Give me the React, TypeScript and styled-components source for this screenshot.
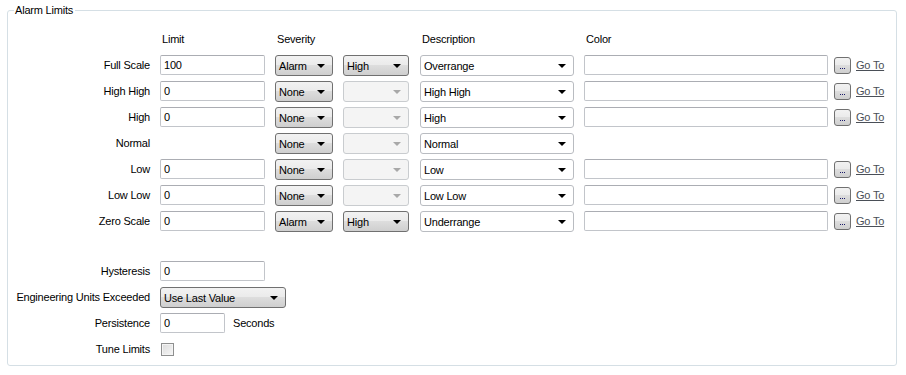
import React from "react";
import styled, { createGlobalStyle } from "styled-components";

const GlobalStyle = createGlobalStyle`
    html, body {
        margin: 0;
        padding: 0;
        background: #ffffff;
    }
    body {
        font-family: "Liberation Sans", Arial, sans-serif;
        font-size: 11px;
        letter-spacing: -0.2px;
        color: #000;
    }
`;

const GroupBox = styled.fieldset`
    box-sizing: border-box;
    width: 890px;
    height: 363px;
    margin: 3px 0 0 7px;
    padding: 9px 0 0 0;
    border: 1px solid #d5dfe5;
    border-radius: 3px;
`;

const Legend = styled.legend`
    margin-left: 6px;
    padding: 0 2px 0 1px;
    line-height: 14px;
`;

const Grid = styled.div`
    display: grid;
    grid-template-columns: 152px 115px 68px 77px 164px 250px 22px auto;
    grid-auto-rows: 26px;
    align-items: center;
`;

const Settings = styled.div`
    display: grid;
    grid-template-columns: 152px auto;
    grid-auto-rows: 26px;
    align-items: center;
    margin-top: 24px;
`;

const Header = styled.div`
    padding-left: 2px;
`;

const Label = styled.div`
    text-align: right;
    padding-right: 10px;
    white-space: nowrap;
`;

const Inline = styled.div`
    display: flex;
    align-items: center;
    gap: 8px;
`;

const TextBox = styled.div<{ $width: number }>`
    box-sizing: border-box;
    width: ${p => p.$width}px;
    height: 20px;
    border: 1px solid #c2c5ca;
    border-top-color: #abadb3;
    border-radius: 2px;
    background: #fff;
    padding: 2px 3px 0;
    line-height: 14px;
`;

type ComboVariant = "button" | "disabled" | "white";

const ComboBox = styled.div<{ $width: number; $variant: ComboVariant }>`
    box-sizing: border-box;
    position: relative;
    width: ${p => p.$width}px;
    height: 21px;
    border: 1px solid ${p => (p.$variant === "button" ? "#707070" : p.$variant === "disabled" ? "#c9cccf" : "#b9bcc1")};
    border-radius: 3px;
    background: ${p =>
        p.$variant === "button"
            ? "linear-gradient(#f2f2f2 0%, #ebebeb 45%, #dddddd 50%, #cfcfcf 100%)"
            : p.$variant === "disabled"
            ? "#f4f4f4"
            : "#ffffff"};
    padding: 3px 0 0 3px;
    line-height: 14px;
    white-space: nowrap;
`;

const Arrow = styled.span<{ $disabled?: boolean }>`
    position: absolute;
    right: 7px;
    top: 8px;
    width: 0;
    height: 0;
    border-left: 4px solid transparent;
    border-right: 4px solid transparent;
    border-top: 4px solid ${p => (p.$disabled ? "#a8a8a8" : "#000")};
`;

const DotsButton = styled.div`
    box-sizing: border-box;
    display: flex;
    justify-content: center;
    align-items: flex-end;
    gap: 1px;
    width: 17px;
    height: 17px;
    padding-bottom: 4px;
    border: 1px solid #707070;
    border-radius: 3px;
    background: linear-gradient(#f2f2f2 0%, #ebebeb 45%, #dddddd 50%, #cfcfcf 100%);
`;

const Dot = styled.span`
    width: 1px;
    height: 1px;
    background: #1a1a6a;
`;

const GoTo = styled.a`
    color: #4a4f57;
    text-decoration: underline;
    cursor: pointer;
`;

const CheckBox = styled.div`
    box-sizing: border-box;
    width: 13px;
    height: 13px;
    margin-left: 1px;
    border: 1px solid #8e8f8f;
    background: linear-gradient(135deg, #dcdcdc, #f6f6f6);
    box-shadow: inset 0 0 0 1px #f4f4f4;
`;

const Combo: React.FC<{ width: number; variant: ComboVariant; value?: string }> = ({ width, variant, value }) => (
    <ComboBox $width={width} $variant={variant}>
        {value}
        <Arrow $disabled={variant === "disabled"} />
    </ComboBox>
);

type LimitRow = {
    name: string;
    limit?: string;
    severity: string;
    priority?: string;
    description: string;
    hasColor: boolean;
};

const rows: LimitRow[] = [
    { name: "Full Scale", limit: "100", severity: "Alarm", priority: "High", description: "Overrange", hasColor: true },
    { name: "High High", limit: "0", severity: "None", description: "High High", hasColor: true },
    { name: "High", limit: "0", severity: "None", description: "High", hasColor: true },
    { name: "Normal", severity: "None", description: "Normal", hasColor: false },
    { name: "Low", limit: "0", severity: "None", description: "Low", hasColor: true },
    { name: "Low Low", limit: "0", severity: "None", description: "Low Low", hasColor: true },
    { name: "Zero Scale", limit: "0", severity: "Alarm", priority: "High", description: "Underrange", hasColor: true },
];

const App: React.FC = () => {
    return (
        <>
            <GlobalStyle />
            <GroupBox>
                <Legend>Alarm Limits</Legend>
                <Grid>
                    <div />
                    <Header>Limit</Header>
                    <Header>Severity</Header>
                    <div />
                    <Header>Description</Header>
                    <Header>Color</Header>
                    <div />
                    <div />

                    {rows.map(row => (
                        <React.Fragment key={row.name}>
                            <Label>{row.name}</Label>
                            <div>{row.limit !== undefined && <TextBox $width={105}>{row.limit}</TextBox>}</div>
                            <Combo width={58} variant="button" value={row.severity} />
                            {row.priority ? (
                                <Combo width={66} variant="button" value={row.priority} />
                            ) : (
                                <Combo width={66} variant="disabled" />
                            )}
                            <Combo width={154} variant="white" value={row.description} />
                            <div>{row.hasColor && <TextBox $width={244} />}</div>
                            <div>
                                {row.hasColor && (
                                    <DotsButton>
                                        <Dot />
                                        <Dot />
                                        <Dot />
                                    </DotsButton>
                                )}
                            </div>
                            <div>{row.hasColor && <GoTo>Go To</GoTo>}</div>
                        </React.Fragment>
                    ))}
                </Grid>

                <Settings>
                    <Label>Hysteresis</Label>
                    <TextBox $width={105}>0</TextBox>

                    <Label>Engineering Units Exceeded</Label>
                    <Combo width={126} variant="button" value="Use Last Value" />

                    <Label>Persistence</Label>
                    <Inline>
                        <TextBox $width={65}>0</TextBox>
                        <span>Seconds</span>
                    </Inline>

                    <Label>Tune Limits</Label>
                    <CheckBox />
                </Settings>
            </GroupBox>
        </>
    );
};

export default App;
